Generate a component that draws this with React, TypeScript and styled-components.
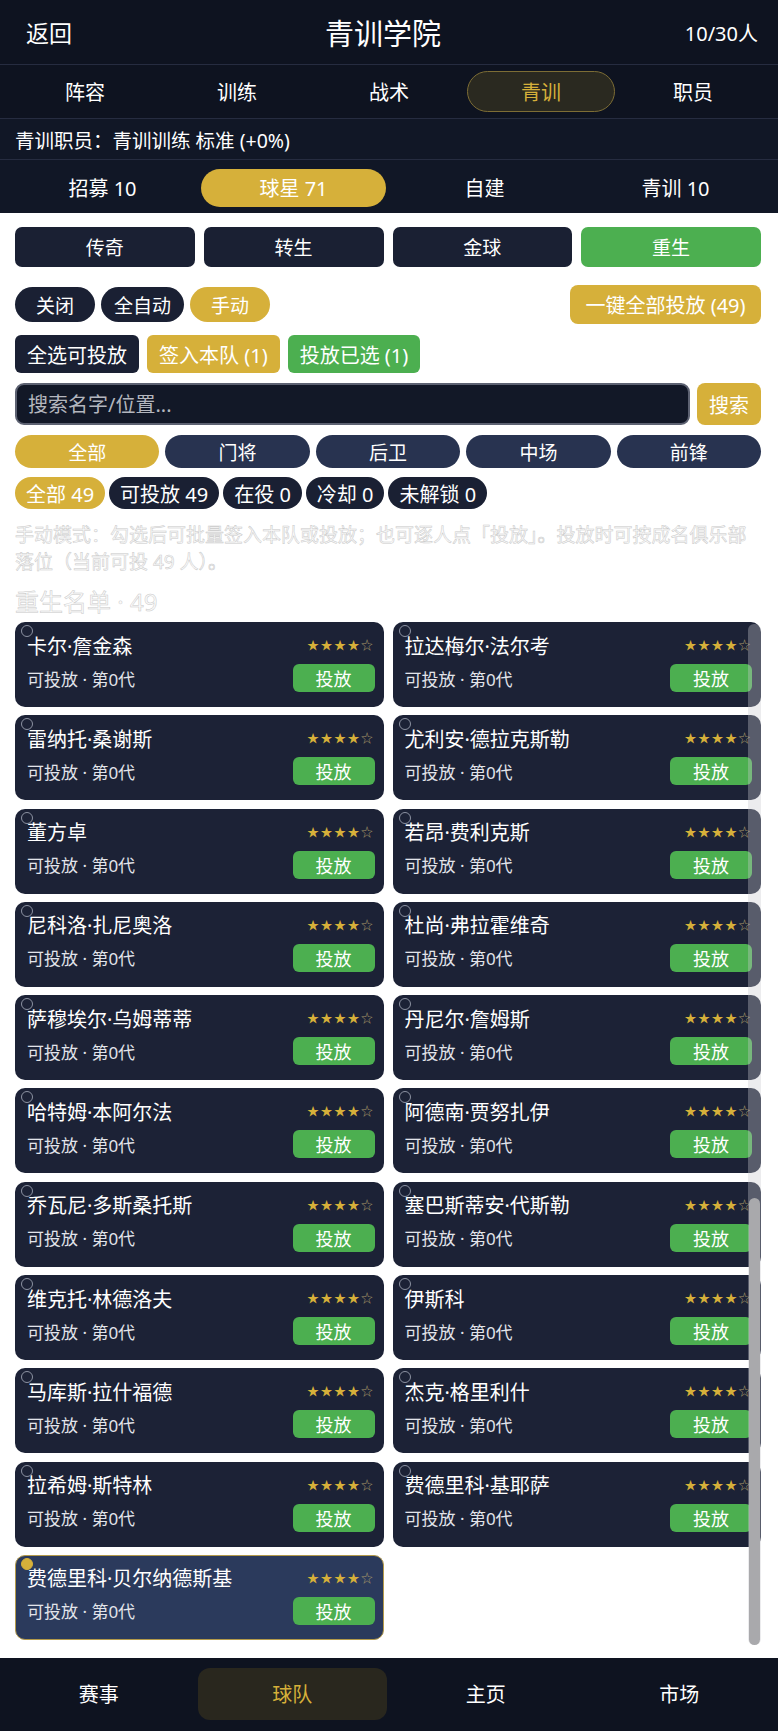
import React from "react";
import styled, { createGlobalStyle, css } from "styled-components";

const GOLD = "#d6b03a";
const GREEN = "#4caf50";
const NAVY = "#1a2033";
const DARK = "#0e1320";

const Global = createGlobalStyle`
  body {
    margin: 0;
    background: #fff;
    font-family: "Noto Sans", "Noto Sans CJK SC", sans-serif;
  }
  * { box-sizing: border-box; }
`;

const Page = styled.div`
  width: 778px;
  min-height: 1731px;
  display: flex;
  flex-direction: column;
  background: #fff;
`;

/* ---------- top area ---------- */
const TopBar = styled.div`
  height: 64px;
  background: ${DARK};
  display: grid;
  grid-template-columns: 1fr auto 1fr;
  align-items: center;
  padding: 0 20px 0 26px;
  color: #fff;
`;
const Back = styled.div`
  font-size: 23px;
`;
const Title = styled.div`
  font-size: 29px;
  margin-left: -18px;
`;
const Count = styled.div`
  font-size: 20px;
  text-align: right;
`;

const Tabs = styled.div`
  height: 55px;
  background: ${DARK};
  border-top: 1px solid #262c40;
  border-bottom: 1px solid #262c40;
  display: grid;
  grid-template-columns: repeat(5, 1fr);
  align-items: center;
  padding: 0 9px;
`;
const Tab = styled.div<{ $on?: boolean }>`
  height: 41px;
  margin: 0 2px;
  border-radius: 21px;
  display: flex;
  align-items: center;
  justify-content: center;
  font-size: 20px;
  color: #fff;
  ${(p) =>
    p.$on &&
    css`
      background: #2a2920;
      border: 1.5px solid #7d6d35;
      color: ${GOLD};
    `}
`;

const StaffRow = styled.div`
  height: 41px;
  background: #111726;
  border-bottom: 1px solid #262c40;
  display: flex;
  align-items: center;
  padding: 0 15px;
  font-size: 19.5px;
  color: #fff;
`;

const SubTabs = styled.div`
  height: 53px;
  background: #111726;
  display: grid;
  grid-template-columns: repeat(4, 1fr);
  align-items: center;
  padding: 0 7px;
`;
const SubTab = styled.div<{ $on?: boolean }>`
  height: 38px;
  margin: 2px 3px 0;
  border-radius: 19px;
  display: flex;
  align-items: center;
  justify-content: center;
  font-size: 20px;
  color: #fff;
  background: ${(p) => (p.$on ? GOLD : "transparent")};
`;

/* ---------- content ---------- */
const Content = styled.div`
  flex: 1;
  padding: 14px 17px 0 15px;
  display: flex;
  flex-direction: column;
`;

const CatRow = styled.div`
  display: grid;
  grid-template-columns: repeat(4, 1fr);
  gap: 9px;
`;
const CatBtn = styled.div<{ $on?: boolean }>`
  height: 40px;
  border-radius: 7px;
  display: flex;
  align-items: center;
  justify-content: center;
  font-size: 19px;
  color: #fff;
  background: ${(p) => (p.$on ? GREEN : NAVY)};
`;

const ModeRow = styled.div`
  margin-top: 18px;
  height: 39px;
  display: flex;
  align-items: center;
  gap: 6px;
`;
const Pill = styled.div<{ $bg: string }>`
  height: 35px;
  min-width: 80px;
  padding: 0 13px;
  border-radius: 18px;
  display: flex;
  align-items: center;
  justify-content: center;
  font-size: 19px;
  color: #fff;
  background: ${(p) => p.$bg};
`;
const BigGold = styled.div`
  margin-left: auto;
  height: 39px;
  min-width: 191px;
  padding: 0 10px;
  border-radius: 8px;
  background: ${GOLD};
  color: #fff;
  font-size: 20px;
  display: flex;
  align-items: center;
  justify-content: center;
`;

const ActionRow = styled.div`
  margin-top: 11px;
  display: flex;
  gap: 8px;
`;
const ActionBtn = styled.div<{ $bg: string }>`
  height: 38px;
  padding: 0 12px;
  border-radius: 6px;
  display: flex;
  align-items: center;
  font-size: 20px;
  color: #fff;
  background: ${(p) => p.$bg};
`;

const SearchRow = styled.div`
  margin-top: 10px;
  display: flex;
  gap: 7px;
  height: 42px;
`;
const SearchInput = styled.input`
  flex: 1;
  min-width: 0;
  height: 42px;
  border: 2px solid #5d6272;
  border-radius: 9px;
  background: #121827;
  padding: 0 11px;
  font-family: inherit;
  font-size: 20px;
  color: #fff;
  outline: none;
  &::placeholder {
    color: #b3b6be;
  }
`;
const SearchBtn = styled.div`
  width: 64px;
  border-radius: 8px;
  background: ${GOLD};
  color: #fff;
  font-size: 20px;
  display: flex;
  align-items: center;
  justify-content: center;
`;

const PosRow = styled.div`
  margin-top: 10px;
  display: flex;
  gap: 6px;
`;
const PosPill = styled.div<{ $on?: boolean }>`
  flex: 1;
  height: 33px;
  border-radius: 17px;
  display: flex;
  align-items: center;
  justify-content: center;
  font-size: 19px;
  color: #fff;
  background: ${(p) => (p.$on ? GOLD : "#283350")};
`;

const ChipRow = styled.div`
  margin-top: 9px;
  display: flex;
  gap: 4px;
`;
const Chip = styled.div<{ $on?: boolean }>`
  height: 32px;
  padding: 0 11px;
  border-radius: 16px;
  display: flex;
  align-items: center;
  font-size: 20px;
  color: #fff;
  background: ${(p) => (p.$on ? GOLD : NAVY)};
`;

const faint = css`
  color: #fbfbfb;
  -webkit-text-stroke: 0.5px #c9c9c9;
`;
const Hint = styled.div`
  margin-top: 13px;
  font-size: 19px;
  line-height: 27px;
  ${faint}
`;
const ListTitle = styled.div`
  margin-top: 12px;
  font-size: 24px;
  line-height: 28px;
  ${faint}
`;

const ListWrap = styled.div`
  position: relative;
  margin-top: 6px;
  padding-bottom: 18px;
`;
const Grid = styled.div`
  display: grid;
  grid-template-columns: 1fr 1fr;
  grid-auto-rows: 85px;
  column-gap: 9px;
  row-gap: 8.3px;
`;

const Card = styled.div<{ $sel?: boolean }>`
  position: relative;
  border-radius: 10px;
  background: ${(p) => (p.$sel ? "#2b3a5c" : "#1c2236")};
  border: 1.5px solid ${(p) => (p.$sel ? "#b49a4a" : "transparent")};
  padding: 8px 8px 0 11px;
  display: flex;
  flex-direction: column;
  gap: 5px;
`;
const Check = styled.div<{ $sel?: boolean }>`
  position: absolute;
  top: 2px;
  left: 5px;
  width: 12px;
  height: 12px;
  border-radius: 50%;
  border: 1.5px solid ${(p) => (p.$sel ? GOLD : "#8c92a2")};
  background: ${(p) => (p.$sel ? GOLD : "transparent")};
`;
const CardTop = styled.div`
  height: 28px;
  display: flex;
  align-items: center;
  justify-content: space-between;
`;
const Name = styled.div`
  font-size: 20px;
  color: #fff;
  white-space: nowrap;
`;
const Stars = styled.div`
  font-size: 12px;
  letter-spacing: 1.5px;
  color: ${GOLD};
  span {
    color: #a89a6a;
  }
`;
const CardBottom = styled.div`
  height: 28px;
  display: flex;
  align-items: center;
  justify-content: space-between;
`;
const Sub = styled.div`
  font-size: 17px;
  color: #e2e4ea;
`;
const ReleaseBtn = styled.div`
  width: 82px;
  height: 28px;
  border-radius: 6px;
  background: ${GREEN};
  color: #fff;
  font-size: 18px;
  display: flex;
  align-items: center;
  justify-content: center;
`;

const Track = styled.div`
  position: absolute;
  right: 0;
  top: 2px;
  bottom: 13px;
  width: 13px;
  border-radius: 6px;
  background: rgba(200, 200, 205, 0.35);
`;
const Thumb = styled.div`
  position: absolute;
  left: 1px;
  right: 1px;
  bottom: 0;
  height: 447px;
  border-radius: 6px;
  background: #a9a9ac;
`;

/* ---------- bottom nav ---------- */
const Nav = styled.div`
  height: 74px;
  background: ${DARK};
  display: grid;
  grid-template-columns: repeat(4, 1fr);
  padding: 10px 2px 12px;
`;
const NavItem = styled.div<{ $on?: boolean }>`
  margin: 0 2px;
  border-radius: 12px;
  display: flex;
  align-items: center;
  justify-content: center;
  font-size: 20px;
  color: ${(p) => (p.$on ? GOLD : "#fff")};
  background: ${(p) => (p.$on ? "#29271e" : "transparent")};
`;

const names = [
  "卡尔·詹金森",
  "拉达梅尔·法尔考",
  "雷纳托·桑谢斯",
  "尤利安·德拉克斯勒",
  "董方卓",
  "若昂·费利克斯",
  "尼科洛·扎尼奥洛",
  "杜尚·弗拉霍维奇",
  "萨穆埃尔·乌姆蒂蒂",
  "丹尼尔·詹姆斯",
  "哈特姆·本阿尔法",
  "阿德南·贾努扎伊",
  "乔瓦尼·多斯桑托斯",
  "塞巴斯蒂安·代斯勒",
  "维克托·林德洛夫",
  "伊斯科",
  "马库斯·拉什福德",
  "杰克·格里利什",
  "拉希姆·斯特林",
  "费德里科·基耶萨",
  "费德里科·贝尔纳德斯基",
];

const PlayerCard = ({ name, sel }: { name: string; sel?: boolean }) => (
  <Card $sel={sel}>
    <Check $sel={sel} />
    <CardTop>
      <Name>{name}</Name>
      <Stars>
        ★★★★<span>☆</span>
      </Stars>
    </CardTop>
    <CardBottom>
      <Sub>可投放 · 第0代</Sub>
      <ReleaseBtn>投放</ReleaseBtn>
    </CardBottom>
  </Card>
);

export default function App() {
  return (
    <Page>
      <Global />
      <TopBar>
        <Back>返回</Back>
        <Title>青训学院</Title>
        <Count>10/30人</Count>
      </TopBar>
      <Tabs>
        <Tab>阵容</Tab>
        <Tab>训练</Tab>
        <Tab>战术</Tab>
        <Tab $on>青训</Tab>
        <Tab>职员</Tab>
      </Tabs>
      <StaffRow>青训职员：青训训练 标准 (+0%)</StaffRow>
      <SubTabs>
        <SubTab>招募 10</SubTab>
        <SubTab $on>球星 71</SubTab>
        <SubTab>自建</SubTab>
        <SubTab>青训 10</SubTab>
      </SubTabs>

      <Content>
        <CatRow>
          <CatBtn>传奇</CatBtn>
          <CatBtn>转生</CatBtn>
          <CatBtn>金球</CatBtn>
          <CatBtn $on>重生</CatBtn>
        </CatRow>

        <ModeRow>
          <Pill $bg={NAVY}>关闭</Pill>
          <Pill $bg={NAVY}>全自动</Pill>
          <Pill $bg={GOLD}>手动</Pill>
          <BigGold>一键全部投放 (49)</BigGold>
        </ModeRow>

        <ActionRow>
          <ActionBtn $bg={NAVY}>全选可投放</ActionBtn>
          <ActionBtn $bg={GOLD}>签入本队 (1)</ActionBtn>
          <ActionBtn $bg={GREEN}>投放已选 (1)</ActionBtn>
        </ActionRow>

        <SearchRow>
          <SearchInput placeholder="搜索名字/位置..." />
          <SearchBtn>搜索</SearchBtn>
        </SearchRow>

        <PosRow>
          <PosPill $on>全部</PosPill>
          <PosPill>门将</PosPill>
          <PosPill>后卫</PosPill>
          <PosPill>中场</PosPill>
          <PosPill>前锋</PosPill>
        </PosRow>

        <ChipRow>
          <Chip $on>全部 49</Chip>
          <Chip>可投放 49</Chip>
          <Chip>在役 0</Chip>
          <Chip>冷却 0</Chip>
          <Chip>未解锁 0</Chip>
        </ChipRow>

        <Hint>
          手动模式：勾选后可批量签入本队或投放；也可逐人点「投放」。投放时可按成名俱乐部落位（当前可投 49 人）。
        </Hint>
        <ListTitle>重生名单 · 49</ListTitle>

        <ListWrap>
          <Grid>
            {names.map((n, i) => (
              <PlayerCard key={n} name={n} sel={i === names.length - 1} />
            ))}
          </Grid>
          <Track>
            <Thumb />
          </Track>
        </ListWrap>
      </Content>

      <Nav>
        <NavItem>赛事</NavItem>
        <NavItem $on>球队</NavItem>
        <NavItem>主页</NavItem>
        <NavItem>市场</NavItem>
      </Nav>
    </Page>
  );
}
